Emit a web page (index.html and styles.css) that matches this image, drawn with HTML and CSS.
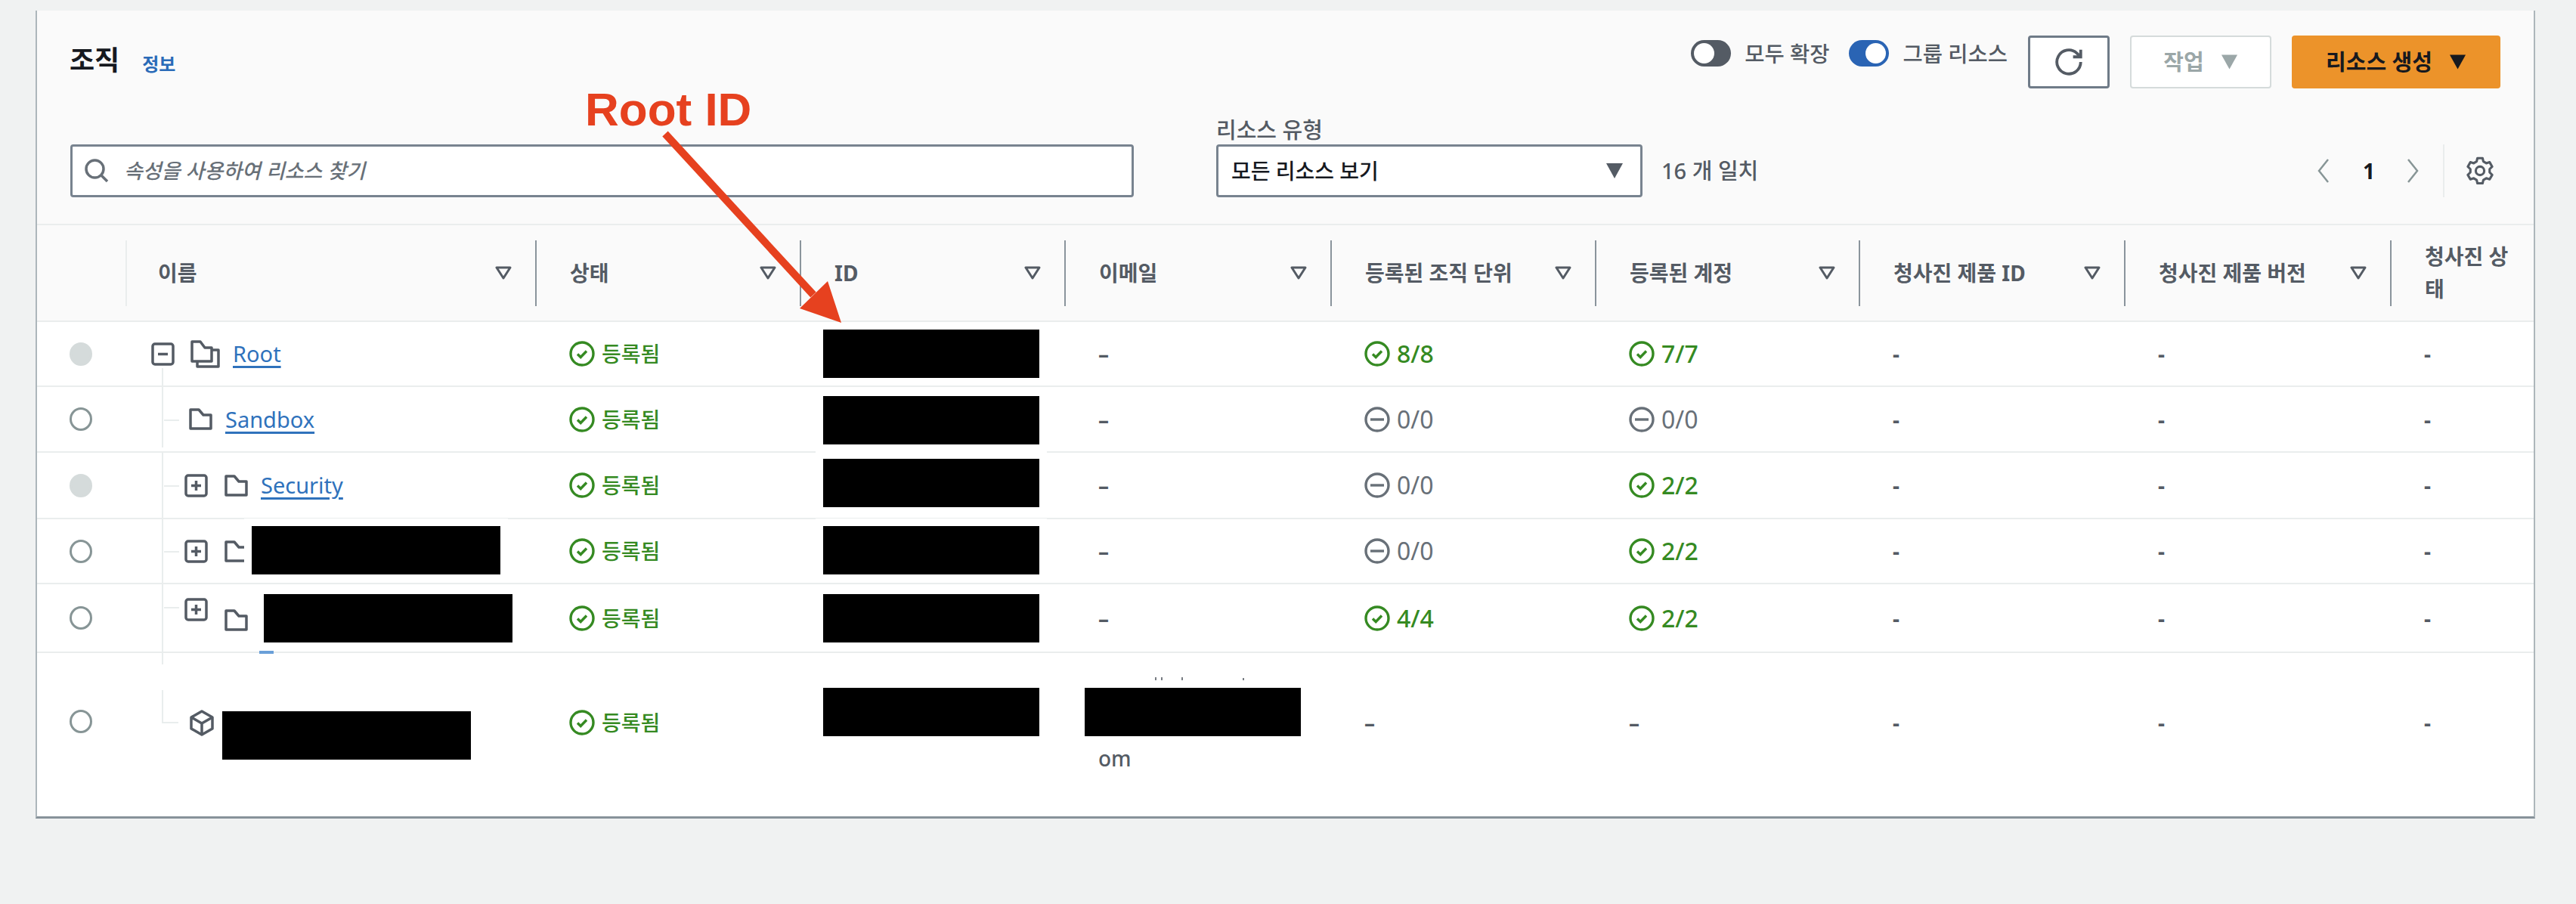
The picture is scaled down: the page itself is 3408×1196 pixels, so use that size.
FILE: index.html
```html
<!DOCTYPE html>
<html lang="ko">
<head>
  <meta charset="UTF-8">
  <title>조직</title>
  <link rel="stylesheet" href="styles.css">
</head>
<body>

  <svg class="icon-defs" aria-hidden="true">
    <symbol id="i-ok" viewBox="0 0 34 34"><circle cx="17" cy="17" r="15" fill="none" stroke="currentColor" stroke-width="3.400"/><path d="M11 17.500l4.200 4 7.800-8" fill="none" stroke="currentColor" stroke-width="3.400"/></symbol>
    <symbol id="i-none" viewBox="0 0 34 34"><circle cx="17" cy="17" r="15" fill="none" stroke="currentColor" stroke-width="3.400"/><path d="M8 17h18" fill="none" stroke="currentColor" stroke-width="3.400"/></symbol>
    <symbol id="i-sort" viewBox="0 0 22 18"><path d="M2 2h18l-9 14z" fill="none" stroke="currentColor" stroke-width="3" stroke-linejoin="round"/></symbol>
    <symbol id="i-caret" viewBox="0 0 24 22"><path d="M1 1h22L12 21z" fill="currentColor"/></symbol>
    <symbol id="i-folder" viewBox="0 0 31 31"><path d="M2 3h11l6 7h10v18H2z" fill="none" stroke="currentColor" stroke-width="3.500" stroke-linejoin="round"/></symbol>
    <symbol id="i-folders" viewBox="0 0 39 37"><path d="M2 2h11l6 8h9v18H2z" fill="none" stroke="currentColor" stroke-width="3.500" stroke-linejoin="round"/><path d="M28 13h9v22H9v-7" fill="none" stroke="currentColor" stroke-width="3.500" stroke-linejoin="round"/></symbol>
    <symbol id="i-minus" viewBox="0 0 31 31"><rect x="2" y="2" width="27" height="27" rx="3" fill="none" stroke="currentColor" stroke-width="3.500"/><path d="M9 15.500h13" stroke="currentColor" stroke-width="3.500"/></symbol>
    <symbol id="i-plus" viewBox="0 0 31 31"><rect x="2" y="2" width="27" height="27" rx="3" fill="none" stroke="currentColor" stroke-width="3.500"/><path d="M9 15.500h13M15.500 9v13" stroke="currentColor" stroke-width="3.500"/></symbol>
    <symbol id="i-cube" viewBox="0 0 34 35"><path d="M17 2l14 8v15l-14 8-14-8V10zM3 10l14 8 14-8M17 18v15" fill="none" stroke="currentColor" stroke-width="3.500" stroke-linejoin="round"/></symbol>
  </svg>

  <main class="panel">
    <header class="panel-head">
      <div class="head-top">
        <h1 class="title">조직</h1>
        <a class="info" href="#">정보</a>
        <div class="head-actions">
          <div class="toggles">
            <span class="toggle"><span class="knob"></span></span>
            <span class="toggle-label">모두 확장</span>
            <span class="toggle on"><span class="knob"></span></span>
            <span class="toggle-label">그룹 리소스</span>
          </div>
          <button class="btn btn-refresh">
            <svg class="refresh-icon" viewBox="0 0 16 16"><path d="M10.500 5H15V.8" fill="none" stroke="currentColor" stroke-width="1.700"/><path d="M15 8a7 7 0 1 1-2.300-5.200L15 5" fill="none" stroke="currentColor" stroke-width="1.700"/></svg>
          </button>
          <button class="btn btn-disabled">작업 <svg class="btn-caret"><use href="#i-caret"/></svg></button>
          <button class="btn btn-primary">리소스 생성 <svg class="btn-caret"><use href="#i-caret"/></svg></button>
        </div>
      </div>

      <div class="head-filters">
        <div class="search">
          <svg class="search-icon" viewBox="0 0 32 32"><circle cx="13.500" cy="13.500" r="11.500" fill="none" stroke="currentColor" stroke-width="3.500"/><path d="M21.500 21.500L30 30" stroke="currentColor" stroke-width="3.500"/></svg>
          <span class="placeholder">속성을 사용하여 리소스 찾기</span>
        </div>
        <div class="type-filter">
          <label class="type-label">리소스 유형</label>
          <div class="select">모든 리소스 보기 <svg class="select-caret"><use href="#i-caret"/></svg></div>
        </div>
        <span class="match-count">16 개 일치</span>
        <div class="pager">
          <svg class="chev" viewBox="0 0 17 34"><path d="M15 2L3 17l12 15" fill="none" stroke="currentColor" stroke-width="2.500"/></svg>
          <b class="page-no">1</b>
          <svg class="chev" viewBox="0 0 17 34"><path d="M2 2l12 15L2 32" fill="none" stroke="currentColor" stroke-width="2.500"/></svg>
          <span class="pager-sep"></span>
          <svg class="gear" viewBox="0 0 16 17"><path d="M6.500 1h3l.5 2 1.700 1 2-.6 1.500 2.600-1.500 1.500v1.900l1.500 1.500-1.500 2.600-2-.6-1.700 1-.5 2h-3l-.5-2-1.700-1-2 .6L.8 10.900l1.500-1.500V7.500L.8 6l1.500-2.600 2 .6 1.700-1z" fill="none" stroke="currentColor" stroke-width="1.400" stroke-linejoin="round"/><circle cx="8" cy="8.500" r="2.500" fill="none" stroke="currentColor" stroke-width="1.400"/></svg>
        </div>
      </div>
    </header>

    <div class="row row-head">
      <div></div>
      <div class="th th-first"><span>이름</span><svg class="sort"><use href="#i-sort"/></svg></div>
      <div class="th"><span>상태</span><svg class="sort"><use href="#i-sort"/></svg></div>
      <div class="th"><span>ID</span><svg class="sort"><use href="#i-sort"/></svg></div>
      <div class="th"><span>이메일</span><svg class="sort"><use href="#i-sort"/></svg></div>
      <div class="th"><span>등록된 조직 단위</span><svg class="sort"><use href="#i-sort"/></svg></div>
      <div class="th"><span>등록된 계정</span><svg class="sort"><use href="#i-sort"/></svg></div>
      <div class="th"><span>청사진 제품 ID</span><svg class="sort"><use href="#i-sort"/></svg></div>
      <div class="th"><span>청사진 제품 버전</span><svg class="sort"><use href="#i-sort"/></svg></div>
      <div class="th th-last"><span>청사진 상태</span></div>
    </div>

    <div class="row row-1">
      <div class="cell cell-radio"><span class="radio disabled"></span></div>
      <div class="cell name lvl-root">
        <svg class="tree-box"><use href="#i-minus"/></svg>
        <svg class="folders"><use href="#i-folders"/></svg>
        <a class="link" href="#">Root</a>
      </div>
      <div class="cell ok"><svg class="st"><use href="#i-ok"/></svg>등록됨</div>
      <div class="cell cell-id"><span class="redact"></span></div>
      <div class="cell dash">–</div>
      <div class="cell ok frac"><svg class="st"><use href="#i-ok"/></svg>8/8</div>
      <div class="cell ok frac"><svg class="st"><use href="#i-ok"/></svg>7/7</div>
      <div class="cell dash">-</div>
      <div class="cell dash">-</div>
      <div class="cell dash">-</div>
    </div>

    <div class="row row-2">
      <div class="cell cell-radio"><span class="radio"></span></div>
      <div class="cell name lvl-leaf">
        <svg class="folder"><use href="#i-folder"/></svg>
        <a class="link" href="#">Sandbox</a>
      </div>
      <div class="cell ok"><svg class="st"><use href="#i-ok"/></svg>등록됨</div>
      <div class="cell cell-id"><span class="redact"></span></div>
      <div class="cell dash">–</div>
      <div class="cell none frac"><svg class="st"><use href="#i-none"/></svg>0/0</div>
      <div class="cell none frac"><svg class="st"><use href="#i-none"/></svg>0/0</div>
      <div class="cell dash">-</div>
      <div class="cell dash">-</div>
      <div class="cell dash">-</div>
    </div>

    <div class="row row-3">
      <div class="cell cell-radio"><span class="radio disabled"></span></div>
      <div class="cell name lvl-node">
        <svg class="tree-box"><use href="#i-plus"/></svg>
        <svg class="folder"><use href="#i-folder"/></svg>
        <a class="link" href="#">Security</a>
      </div>
      <div class="cell ok"><svg class="st"><use href="#i-ok"/></svg>등록됨</div>
      <div class="cell cell-id"><span class="redact"></span></div>
      <div class="cell dash">–</div>
      <div class="cell none frac"><svg class="st"><use href="#i-none"/></svg>0/0</div>
      <div class="cell ok frac"><svg class="st"><use href="#i-ok"/></svg>2/2</div>
      <div class="cell dash">-</div>
      <div class="cell dash">-</div>
      <div class="cell dash">-</div>
    </div>

    <div class="row row-4">
      <div class="cell cell-radio"><span class="radio"></span></div>
      <div class="cell name lvl-node">
        <svg class="tree-box"><use href="#i-plus"/></svg>
        <svg class="folder"><use href="#i-folder"/></svg>
        <span class="redact redact-name"></span>
      </div>
      <div class="cell ok"><svg class="st"><use href="#i-ok"/></svg>등록됨</div>
      <div class="cell cell-id"><span class="redact"></span></div>
      <div class="cell dash">–</div>
      <div class="cell none frac"><svg class="st"><use href="#i-none"/></svg>0/0</div>
      <div class="cell ok frac"><svg class="st"><use href="#i-ok"/></svg>2/2</div>
      <div class="cell dash">-</div>
      <div class="cell dash">-</div>
      <div class="cell dash">-</div>
    </div>

    <div class="row row-5">
      <div class="cell cell-radio"><span class="radio"></span></div>
      <div class="cell name lvl-node">
        <svg class="tree-box"><use href="#i-plus"/></svg>
        <svg class="folder"><use href="#i-folder"/></svg>
        <span class="redact redact-name"></span>
        <span class="link-scrap"></span>
      </div>
      <div class="cell ok"><svg class="st"><use href="#i-ok"/></svg>등록됨</div>
      <div class="cell cell-id"><span class="redact"></span></div>
      <div class="cell dash">–</div>
      <div class="cell ok frac"><svg class="st"><use href="#i-ok"/></svg>4/4</div>
      <div class="cell ok frac"><svg class="st"><use href="#i-ok"/></svg>2/2</div>
      <div class="cell dash">-</div>
      <div class="cell dash">-</div>
      <div class="cell dash">-</div>
    </div>

    <div class="row row-6">
      <div class="cell cell-radio"><span class="radio"></span></div>
      <div class="cell name lvl-leaf">
        <svg class="cube"><use href="#i-cube"/></svg>
        <span class="redact redact-account"></span>
      </div>
      <div class="cell ok"><svg class="st"><use href="#i-ok"/></svg>등록됨</div>
      <div class="cell cell-id"><span class="redact"></span></div>
      <div class="cell cell-email">
        <svg class="scrap" viewBox="0 0 240 6"><path d="M121 0v6M129 0v6M156 0v6M237 1v4" stroke="#777c82" stroke-width="2"/></svg>
        <span class="redact"></span>
        <span class="email-end">om</span>
      </div>
      <div class="cell dash">–</div>
      <div class="cell dash">–</div>
      <div class="cell dash">-</div>
      <div class="cell dash">-</div>
      <div class="cell dash">-</div>
    </div>

    <!-- annotation drawn on top of the screenshot -->
    <span class="callout">Root ID</span>
    <svg class="callout-arrow" viewBox="860 170 270 270">
      <path d="M880 177L1076 390" stroke="#e6411f" stroke-width="10"/>
      <path d="M1113 427L1095 372L1058 408z" fill="#e6411f"/>
    </svg>
  </main>

</body>
</html>
```

FILE: styles.css
```css
* {
  box-sizing: border-box;
}

body {
  margin: 0;
  height: 1196px;
  overflow: hidden;
  background: #f0f2f2;
  color: #545b64;
  font-family: "Noto Sans", "Noto Sans CJK KR", sans-serif;
  font-size: 28px;
  font-weight: 500;
  line-height: 34px;
}

svg {
  display: block;
  flex: none;
}

a {
  color: inherit;
}

.icon-defs {
  width: 0;
  height: 0;
  position: absolute;
}

.panel {
  position: relative;
  width: 3307px;
  height: 1069px;
  margin: 14px 0 0 47px;
  background: #fff;
  border-left: 2px solid #adb6bb;
  border-right: 2px solid #adb6bb;
  border-bottom: 3px solid #87929a;
}

/* header */
.panel-head {
  height: 284px;
  padding: 33px 44px 0;
  background: #fafafa;
  border-bottom: 2px solid #eaeded;
}

.head-top {
  display: flex;
  align-items: center;
  height: 70px;
}

.title {
  margin: -4px 30px 0 -1px;
  color: #16191f;
  font-size: 36px;
  font-weight: 700;
  line-height: 40px;
}

.info {
  margin-top: 6px;
  color: #2a6bb8;
  font-size: 24px;
  font-weight: 700;
  text-decoration: none;
}

.head-actions {
  display: flex;
  margin-left: auto;
  gap: 27px;
}

.toggles {
  display: flex;
  align-items: center;
  align-self: flex-start;
  height: 35px;
  margin-top: 6px;
  font-size: 28.500px;
}

.toggle {
  display: flex;
  align-items: center;
  width: 53px;
  height: 35px;
  padding: 0 4px;
  border-radius: 18px;
  background: #545b64;
}

.toggle.on {
  justify-content: flex-end;
  background: #2a64b4;
}

.knob {
  width: 27px;
  height: 27px;
  border-radius: 50%;
  background: #fff;
}

.toggle-label {
  margin: 0 26px 0 18px;
}

.toggle-label:last-child {
  margin-right: 0;
}

.btn {
  display: flex;
  align-items: center;
  justify-content: center;
  height: 70px;
  border-radius: 4px;
  font: inherit;
  font-size: 29px;
  font-weight: 700;
}

.btn-refresh {
  width: 108px;
  padding: 0;
  background: #fff;
  border: 3px solid #6f7b88;
  color: #545b64;
}

.refresh-icon {
  width: 36px;
  height: 36px;
}

.btn-disabled {
  width: 187px;
  background: #fff;
  border: 2px solid #d5dbdb;
  color: #9ba7a8;
}

.btn-primary {
  width: 276px;
  background: #ec932a;
  border: 0;
  color: #16191f;
}

.btn-caret {
  width: 23px;
  height: 22px;
  margin-left: 22px;
}

.head-filters {
  display: flex;
  align-items: flex-end;
  margin-top: 38px;
}

.search {
  display: flex;
  align-items: center;
  width: 1407px;
  height: 70px;
  padding-left: 16px;
  background: #fff;
  border: 3px solid #78838f;
  border-radius: 4px;
  color: #687078;
}

.search-icon {
  width: 32px;
  height: 32px;
}

.placeholder {
  margin-left: 20px;
  font-size: 27px;
  font-style: italic;
}

.type-filter {
  margin-left: 109px;
}

.type-label {
  display: block;
  height: 36px;
  font-size: 29px;
}

.select {
  display: flex;
  align-items: center;
  width: 564px;
  height: 70px;
  padding: 0 22px 0 17px;
  background: #fff;
  border: 3px solid #78838f;
  border-radius: 4px;
  color: #16191f;
}

.select-caret {
  width: 24px;
  height: 22px;
  margin-left: auto;
  color: #545b64;
}

.match-count {
  align-self: flex-end;
  margin: 0 0 18px 25px;
  font-size: 29px;
}

.pager {
  display: flex;
  align-items: center;
  height: 70px;
  margin-left: auto;
  padding-right: 9px;
  color: #879596;
}

.chev {
  width: 17px;
  height: 34px;
}

.page-no {
  margin: 0 42px 0 44px;
  color: #16191f;
}

.pager-sep {
  height: 70px;
  margin: 0 29px 0 31px;
  border-left: 2px solid #eaeded;
}

.gear {
  width: 36px;
  height: 38px;
  color: #545b64;
}

/* table */
.row {
  display: grid;
  grid-template-columns: 117px 542px 350px 350px 352px 350px 349px 351px 352px 190px;
  align-items: center;
  border-bottom: 2px solid #eaeded;
}

.row-head {
  height: 128px;
  background: #fafafa;
  font-weight: 700;
}

.th {
  display: flex;
  align-items: center;
  justify-content: space-between;
  height: 87px;
  padding: 0 31px 0 44px;
  border-left: 2px solid #8a949c;
}

.th-first {
  padding-left: 41px;
  border-left-color: #eaeded;
}

.th-last {
  padding-right: 20px;
  line-height: 43px;
  word-break: break-all;
}

.sort {
  width: 22px;
  height: 18px;
}

.row-1 { height: 86px; }
.row-2 { height: 87px; }
.row-3 { height: 88px; }
.row-4 { height: 86px; }
.row-5 { height: 91px; }

.row-6 {
  height: 216px;
  align-items: start;
  border-bottom: 0;
  padding-top: 75px;
}

.cell {
  display: flex;
  align-items: center;
  padding-left: 45px;
}

.cell-radio {
  padding-left: 43px;
}

.radio {
  width: 30px;
  height: 31px;
  border: 3px solid #879596;
  border-radius: 50%;
}

.radio.disabled {
  background: #d5dbdb;
  border-color: #d5dbdb;
}

.st {
  width: 34px;
  height: 34px;
  margin-right: 9px;
}

.ok {
  color: #358a22;
}

.none {
  color: #687078;
  font-weight: 400;
}

.frac {
  font-size: 32px;
}

.dash {
  font-weight: 700;
}

.link {
  margin-left: 17px;
  color: #2f72bc;
  font-size: 29px;
  font-weight: 400;
  text-decoration-thickness: 3px;
  text-underline-offset: 5px;
}

/* blacked out values keep a white edge over whatever they sit on */
.redact {
  position: relative;
  z-index: 1;
  display: block;
  flex: none;
  width: 286px;
  height: 64px;
  background: #000;
  box-shadow: 0 0 0 10px #fff;
}

.cell-id {
  padding-left: 31px;
}

.row-2 .redact { margin-top: 3px; }
.row-3 .redact { margin-top: -7px; }
.row-4 .cell-id .redact { margin-top: -2px; }

.row-6 .cell-id {
  margin-top: -29px;
}

.cell-email {
  position: relative;
  display: block;
  margin-top: -29px;
}

.cell-email .redact {
  margin-left: -18px;
}

.scrap {
  position: absolute;
  top: -14px;
  left: 0;
  width: 240px;
  height: 6px;
}

.email-end {
  display: block;
  margin-top: 12px;
}

/* tree column */
.name {
  position: relative;
  align-self: stretch;
  color: #545b64;
}

.name::before {
  content: "";
  position: absolute;
  left: 48px;
  top: 0;
  bottom: 0;
  width: 2px;
  background: #e9eded;
}

.name::after {
  content: "";
  position: absolute;
  left: 51px;
  top: 50%;
  width: 20px;
  height: 2px;
  background: #e9eded;
}

.lvl-root { padding-left: 34px; }
.lvl-leaf { padding-left: 84px; }
.lvl-node { padding-left: 78px; }

.row-1 .name::before { top: 61px; }
.row-1 .name::after { display: none; }
.row-2 .name::before { bottom: 5px; }
.row-5 .name::before { bottom: -17px; }
.row-5 .name::after { top: 30px; }

.row-6 .name::before {
  top: -26px;
  height: 44px;
  bottom: auto;
}

.row-6 .name::after {
  left: 50px;
  top: 16px;
}

.tree-box {
  width: 31px;
  height: 31px;
}

.folders {
  width: 39px;
  height: 37px;
  margin-left: 21px;
}

.folder {
  width: 31px;
  height: 31px;
}

.tree-box + .folder {
  margin-left: 22px;
}

.redact-name {
  width: 329px;
  margin-left: 21px;
}

.row-4 .redact-name {
  margin: -2px 0 0 5px;
}

.row-5 .tree-box {
  align-self: flex-start;
  margin-top: 18px;
}

.row-5 .folder {
  margin-top: 6px;
}

.link-scrap {
  position: absolute;
  left: 177px;
  bottom: -3px;
  width: 19px;
  height: 4px;
  background: #6a9fd8;
}

.row-6 .name {
  align-items: flex-start;
}

.cube {
  width: 34px;
  height: 35px;
}

.redact-account {
  width: 329px;
  margin: 2px 0 0 10px;
}

/* annotation */
.callout {
  position: absolute;
  z-index: 2;
  left: 725px;
  top: 91px;
  color: #e6411f;
  font-family: "Liberation Sans", sans-serif;
  font-size: 62px;
  font-weight: 700;
  line-height: 80px;
}

.callout-arrow {
  position: absolute;
  z-index: 2;
  left: 811px;
  top: 156px;
  width: 270px;
  height: 270px;
}
```
